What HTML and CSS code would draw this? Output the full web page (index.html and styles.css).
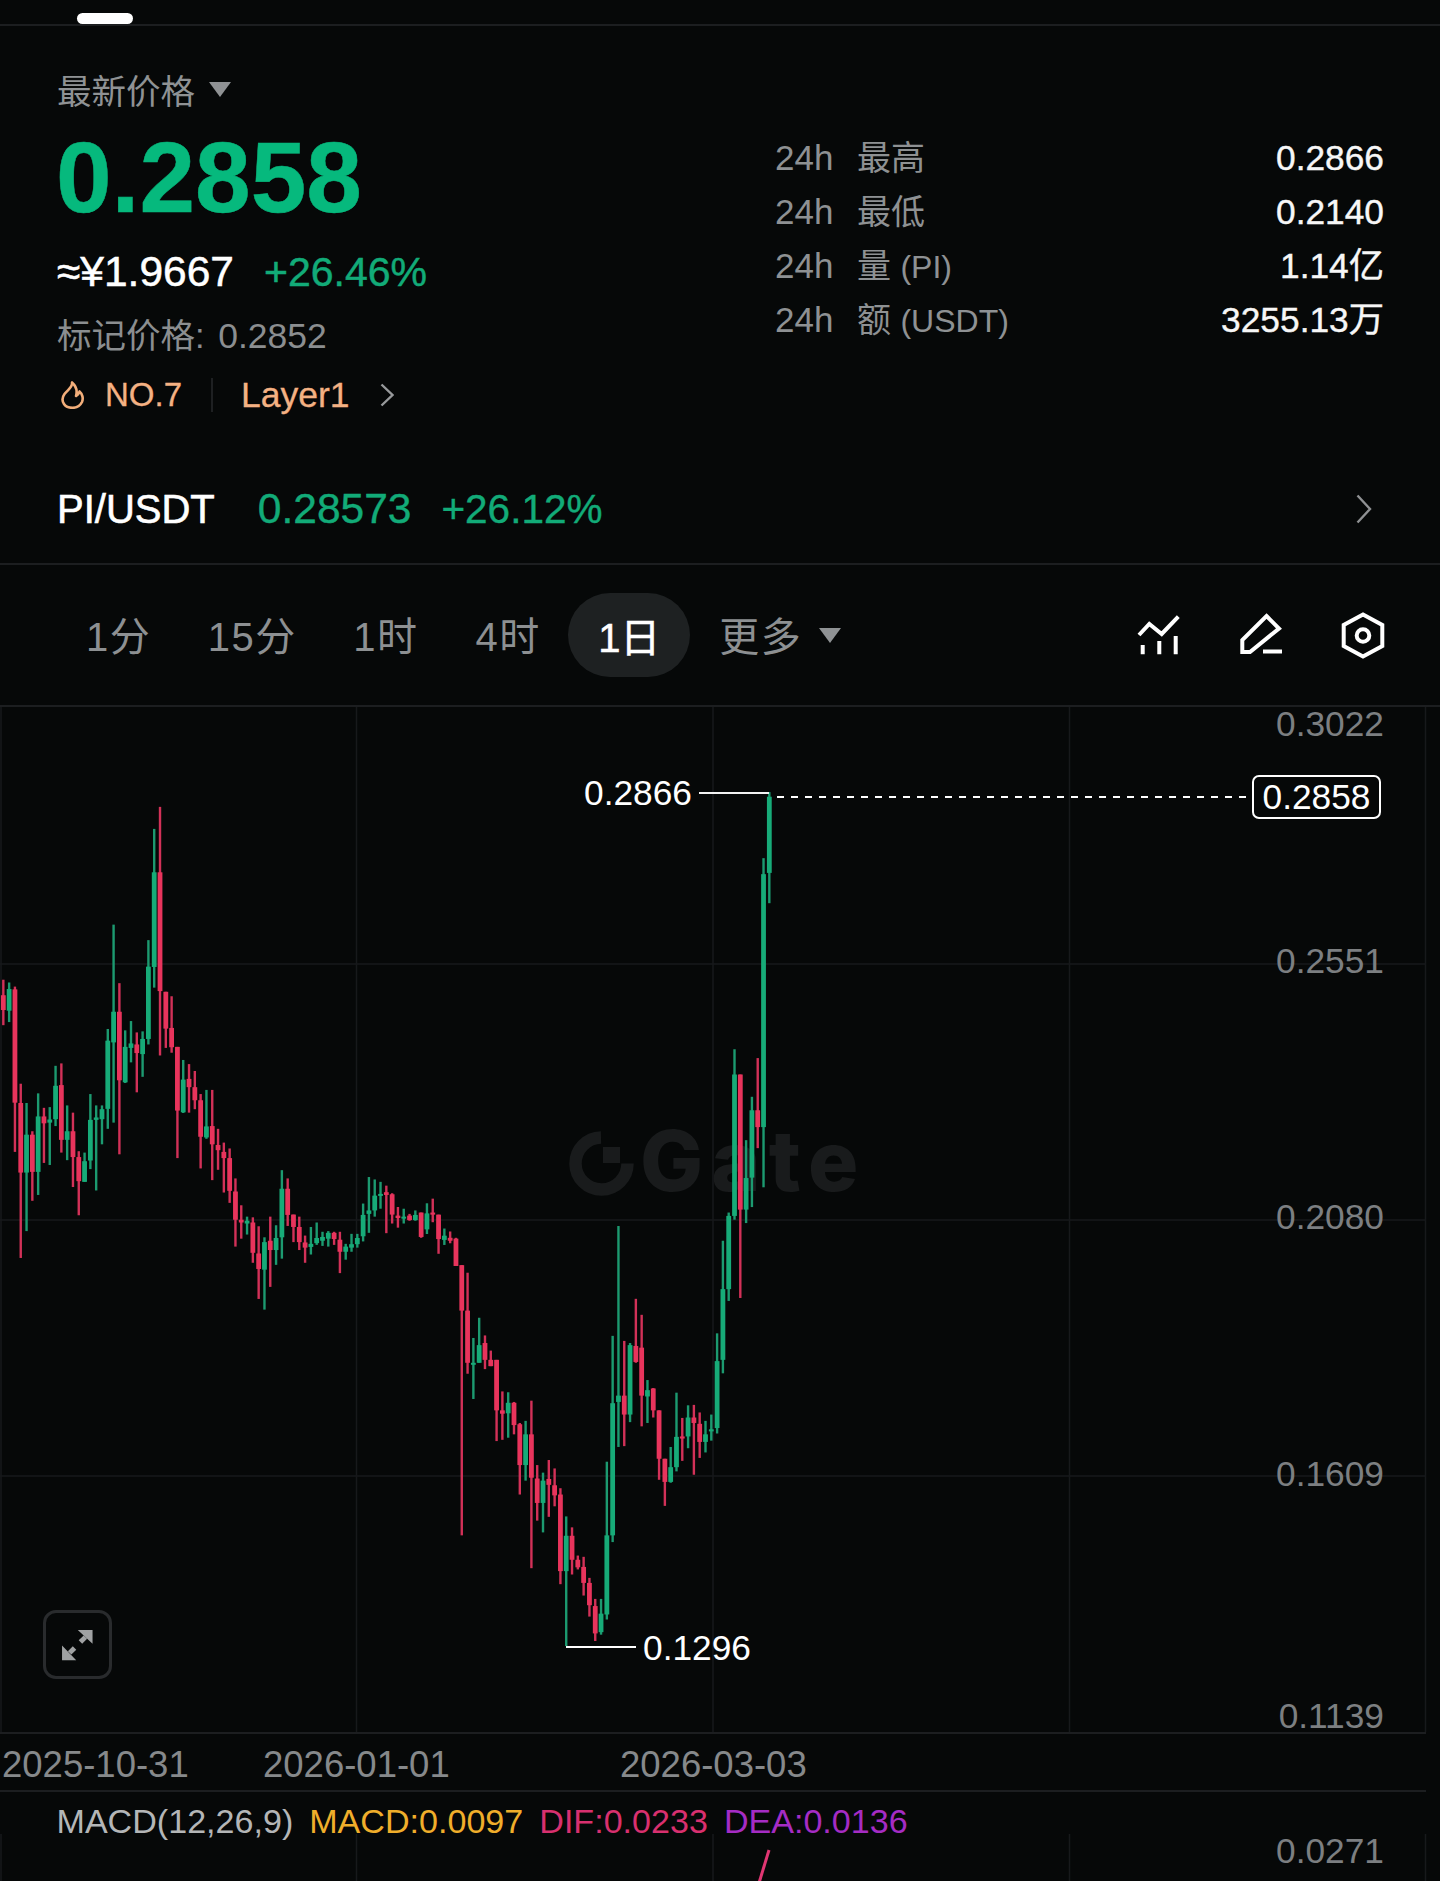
FILE: index.html
```html
<!DOCTYPE html>
<html lang="zh-CN">
<head>
    <meta charset="UTF-8">
    <meta name="viewport" content="width=device-width, initial-scale=1.0">
    <title>PI/USDT</title>
    <link rel="stylesheet" href="styles.css">
</head>
<body>
    <div class="topbar">
        <div class="topbar-pill"></div>
    </div>

    <section class="summary">
        <div class="price-col">
            <div class="price-label">最新价格 <span class="caret"></span></div>
            <div class="price-main">0.2858</div>
            <div class="price-sub">
                <span class="price-cny">≈¥1.9667</span>
                <span class="price-change">+26.46%</span>
            </div>
            <div class="price-mark">标记价格: <span class="price-mark-value">0.2852</span></div>
            <div class="tags">
                <svg class="flame" viewBox="0 0 24 28" width="24" height="28">
                    <path d="M11 1.500C12 6 7 8.500 3.500 13 1 16.500 1 20 3 23c2 3 5.500 3.800 8.500 3.800 4 0 7.500-1.800 9.500-5.800 1.500-3.500.5-8-2.500-10.500-.5 2-1.500 3.500-3.500 4.500C16.500 10 15 5 11 1.500Z" fill="none" stroke="#f2ae7a" stroke-width="2.600" stroke-linejoin="round"/>
                </svg>
                <span class="tag-rank">NO.7</span>
                <span class="tag-divider"></span>
                <span class="tag-sector">Layer1</span>
                <svg class="tag-chevron" viewBox="0 0 14 24" width="14" height="24">
                    <path d="M1.500 1.500 12.500 12 1.500 22.500" fill="none" stroke="#97999b" stroke-width="2.400"/>
                </svg>
            </div>
        </div>

        <div class="stats">
            <div class="stat-row"><span class="stat-name"><span class="stat-period">24h</span>最高</span><span class="stat-value">0.2866</span></div>
            <div class="stat-row"><span class="stat-name"><span class="stat-period">24h</span>最低</span><span class="stat-value">0.2140</span></div>
            <div class="stat-row"><span class="stat-name"><span class="stat-period">24h</span>量 <span class="stat-unit">(PI)</span></span><span class="stat-value">1.14亿</span></div>
            <div class="stat-row"><span class="stat-name"><span class="stat-period">24h</span>额 <span class="stat-unit">(USDT)</span></span><span class="stat-value">3255.13万</span></div>
        </div>
    </section>

    <section class="pair-row">
        <span class="pair-name">PI/USDT</span>
        <span class="pair-price">0.28573</span>
        <span class="pair-change">+26.12%</span>
        <svg class="pair-chevron" viewBox="0 0 16 30" width="16" height="30">
            <path d="M1.500 1.500 14 15 1.500 28.500" fill="none" stroke="#8f9193" stroke-width="2.400"/>
        </svg>
    </section>

    <nav class="timeframes">
        <a class="tf tf-1m">1分</a>
        <a class="tf tf-15m">15分</a>
        <a class="tf tf-1h">1时</a>
        <a class="tf tf-4h">4时</a>
        <a class="tf tf-active">1日</a>
        <a class="tf tf-more">更多 <span class="caret caret-more"></span></a>

        <div class="tools">
            <svg viewBox="0 0 48 48" width="48" height="48">
                <path d="M4 24 14.300 13 26.700 23 43.300 5.700" fill="none" stroke="#fff" stroke-width="4"/>
                <path d="M7.700 34v9.300M24.300 30v13.300M40.700 25v18.300" fill="none" stroke="#fff" stroke-width="4"/>
            </svg>
            <svg viewBox="0 0 48 48" width="48" height="48">
                <path d="M29.500 5 42 17.500 13 41H5.300V29Z" fill="none" stroke="#fff" stroke-width="4"/>
                <path d="M26 40.500H45" fill="none" stroke="#fff" stroke-width="4"/>
            </svg>
            <svg viewBox="0 0 48 48" width="48" height="48">
                <path d="M24 3.500 43.300 14V35L24 45.500 4.700 35V14Z" fill="none" stroke="#fff" stroke-width="4"/>
                <circle cx="24" cy="24.500" r="6.300" fill="none" stroke="#fff" stroke-width="4"/>
            </svg>
        </div>
    </nav>

    <section class="chart-main">
        <svg id="candles" class="chart-canvas" width="1440" height="1025"></svg>

        <span class="axis-price axis-3022">0.3022</span>
        <span class="axis-price axis-2551">0.2551</span>
        <span class="axis-price axis-2080">0.2080</span>
        <span class="axis-price axis-1609">0.1609</span>
        <span class="axis-price axis-1139">0.1139</span>

        <span class="marker marker-high">0.2866</span>
        <span class="marker marker-low">0.1296</span>
        <span class="last-price">0.2858</span>

        <div class="expand-btn">
            <svg viewBox="0 0 63 64" width="62" height="63">
                <path d="M32.300 17.300H47.300V31.300ZM16.300 33V48H30.700Z" fill="#a0a2a3"/>
                <path d="M24 40.500 29 35.500M35 29.500 40 24.500" stroke="#a0a2a3" stroke-width="5" fill="none"/>
            </svg>
        </div>
    </section>

    <section class="x-axis">
        <span class="axis-date date-first">2025-10-31</span>
        <span class="axis-date date-jan">2026-01-01</span>
        <span class="axis-date date-mar">2026-03-03</span>
    </section>

    <section class="macd">
        <svg id="macdGrid" class="chart-canvas" width="1440" height="89"></svg>
        <div class="macd-legend">
            <span class="legend-name">MACD(12,26,9)</span>
            <span class="legend-macd">MACD:0.0097</span>
            <span class="legend-dif">DIF:0.0233</span>
            <span class="legend-dea">DEA:0.0136</span>
        </div>
        <span class="axis-price axis-0271">0.0271</span>
    </section>

    <script src="app.js"></script>
</body>
</html>
```

FILE: styles.css
```css
* {
    box-sizing: border-box;
}
html, body {
    margin: 0;
    padding: 0;
}
body {
    width: 1440px;
    height: 1881px;
    overflow: hidden;
    background-color: #060808;
    color: #fff;
    font-family: "Liberation Sans", "Noto Sans CJK SC", sans-serif;
}

/* top strip */
.topbar {
    height: 26px;
    padding: 13px 0 0 77px;
    border-bottom: 2px solid #1c1e20;
}
.topbar-pill {
    width: 56px;
    height: 11px;
    border-radius: 6px;
    background-color: #fff;
}

/* price summary */
.summary {
    display: flex;
    justify-content: space-between;
    height: 389px;
    padding: 43px 56px 0 57px;
}
.price-label {
    display: flex;
    align-items: center;
    height: 40px;
    font-size: 34.500px;
    color: #8f9294;
}
.caret {
    display: inline-block;
    width: 0;
    height: 0;
    margin-left: 14px;
    border-left: 11px solid transparent;
    border-right: 11px solid transparent;
    border-top: 15px solid #8f9294;
}
.price-main {
    margin: 19px 0 0 -1px;
    height: 98px;
    line-height: 98px;
    font-size: 100px;
    font-weight: bold;
    color: #06b97d;
    -webkit-text-stroke: 0.5px #06b97d;
}
.price-sub {
    display: flex;
    align-items: center;
    gap: 30px;
    margin-top: 21px;
    height: 50px;
}
.price-cny {
    font-size: 42.500px;
    color: #fff;
    -webkit-text-stroke: 0.5px #fff;
}
.price-change {
    font-size: 41px;
    color: #12ab78;
    -webkit-text-stroke: 0.5px #12ab78;
}
.price-mark {
    margin-top: 17px;
    height: 44px;
    line-height: 44px;
    font-size: 34.500px;
    color: #8b8e90;
}
.price-mark-value {
    margin-left: 4px;
    font-size: 35.500px;
}
.tags {
    display: flex;
    align-items: center;
    margin-top: 17px;
    height: 40px;
    padding-left: 4px;
}
.tag-rank, .tag-sector {
    color: #f4b183;
    -webkit-text-stroke: 0.3px #f4b183;
}
.tag-rank {
    margin-left: 20px;
    font-size: 33px;
}
.tag-divider {
    width: 2px;
    height: 34px;
    margin: 0 28px 0 29px;
    background-color: #1e2022;
}
.tag-sector {
    font-size: 35.500px;
}
.tag-chevron {
    margin-left: 30px;
}

.stats {
    width: 609px;
    margin-top: 62px;
}
.stat-row {
    display: flex;
    justify-content: space-between;
    align-items: center;
    height: 54px;
    font-size: 34px;
    line-height: 40px;
}
.stat-name {
    color: #8e9193;
}
.stat-period {
    display: inline-block;
    width: 82px;
    font-size: 35px;
}
.stat-unit {
    font-size: 32px;
}
.stat-value {
    font-size: 35.300px;
    color: #f7f7f7;
    -webkit-text-stroke: 0.4px #f7f7f7;
}

/* pair row */
.pair-row {
    display: flex;
    align-items: center;
    height: 150px;
    padding: 40px 68px 0 57px;
    border-bottom: 2px solid #1c1e20;
}
.pair-name {
    font-size: 40px;
    color: #fff;
    -webkit-text-stroke: 0.6px #fff;
}
.pair-price {
    margin-left: 43px;
    font-size: 42.500px;
    color: #12ab78;
    -webkit-text-stroke: 0.4px #12ab78;
}
.pair-change {
    margin-left: 30px;
    font-size: 40.500px;
    color: #12ab78;
    -webkit-text-stroke: 0.4px #12ab78;
}
.pair-chevron {
    margin-left: auto;
}

/* timeframe tabs */
.timeframes {
    display: flex;
    align-items: center;
    height: 142px;
    padding: 0 53px 0 86px;
    border-bottom: 2px solid #1c1e20;
    font-size: 40px;
    letter-spacing: 1.500px;
    color: #8d9092;
}
.tf {
    padding-bottom: 3px;
}
.tf-15m {
    margin-left: 56.500px;
}
.tf-1h {
    margin-left: 56.500px;
}
.tf-4h {
    margin-left: 57px;
}
.tf-active {
    display: flex;
    align-items: center;
    justify-content: center;
    width: 122px;
    height: 84px;
    margin-left: 27.500px;
    padding-bottom: 1px;
    border-radius: 42px;
    background-color: #1e2122;
    letter-spacing: 0;
    color: #fff;
    -webkit-text-stroke: 0.5px #fff;
}
.tf-more {
    display: flex;
    align-items: center;
    margin-left: 29px;
}
.caret-more {
    margin: 3px 0 0 17px;
    border-left-width: 11.500px;
    border-right-width: 11.500px;
}
.tools {
    display: flex;
    gap: 54px;
    margin-left: auto;
}

/* chart */
.chart-main {
    position: relative;
    height: 1025px;
}
.chart-canvas {
    position: absolute;
    top: 0;
    left: 0;
}
.axis-price {
    position: absolute;
    right: 56px;
    font-size: 35.300px;
    line-height: 40px;
    color: #7c7f81;
}
.axis-3022 { top: -3px; }
.axis-2551 { top: 234px; }
.axis-2080 { top: 490px; }
.axis-1609 { top: 747px; }
.axis-1139 { top: 989px; }
.axis-0271 { top: 39px; }

.marker {
    position: absolute;
    font-size: 35.300px;
    line-height: 40px;
    color: #fff;
}
.marker-high {
    top: 66px;
    left: 584px;
}
.marker-low {
    top: 921px;
    left: 643px;
}
.last-price {
    position: absolute;
    top: 68px;
    left: 1252px;
    width: 129px;
    height: 44px;
    border: 2px solid #fff;
    border-radius: 7px;
    background-color: #060808;
    font-size: 35.300px;
    line-height: 40px;
    text-align: center;
    color: #fff;
}
.expand-btn {
    position: absolute;
    top: 903px;
    left: 43px;
    width: 69px;
    height: 69px;
    border: 3px solid #292b2d;
    border-radius: 13px;
}

/* date axis */
.x-axis {
    position: relative;
    height: 60px;
    border-top: 2px solid #1c1e20;
    border-bottom: 2px solid #1c1e20;
    width: 1426px;
}
.axis-date {
    position: absolute;
    top: 11px;
    font-size: 36.500px;
    line-height: 40px;
    color: #86898b;
}
.date-first { left: 2px; }
.date-jan { left: 263px; }
.date-mar { left: 620px; }

/* macd */
.macd {
    position: relative;
    height: 89px;
}
.macd-legend {
    position: relative;
    display: flex;
    gap: 16px;
    padding: 9px 0 0 56.500px;
    font-size: 34.100px;
    line-height: 40px;
}
.legend-name { color: #b4b6b7; }
.legend-macd { color: #f0ae2b; }
.legend-dif { color: #d8306f; }
.legend-dea { color: #a52cc4; }
```

FILE: app.js
```js
// candles read off the chart: [color, wickTop, bodyTop, bodyBottom, wickBottom]
// first block is measured from y=780 at 2.904 units per px, second from y=1000 at 2.376
const firstRun = [
    ["r",580,625,668,712],["g",588,607,670,703],["r",600,608,937,1080],["r",882,938,1140,1388],
    ["g",938,1030,1140,1310],["r",1020,1030,1138,1222],["g",910,977,1138,1205],["r",952,977,997,1112],
    ["g",950,986,995,1118],["g",830,888,985,1005],["r",823,886,1045,1082],["g",945,1020,1045,1104],
    ["r",966,1020,1095,1182],["r",1078,1095,1165,1264],["g",1082,1107,1167,1167],["g",912,987,1105,1130],
    ["g",945,980,987,1192],["g",945,956,985,1058],["g",723,757,955,1013],["g",420,673,762,995],
    ["r",590,673,872,1087],["g",727,775,878,880],["g",700,765,778,820],["r",733,768,793,907],
    ["g",730,752,796,862],["g",465,542,752,768],["g",142,268,543,603],["r",78,268,613,800],
    ["r",615,615,722,778],["r",628,720,776,792],["r",775,775,960,1098],["g",813,870,965,967],
    ["r",825,868,892,966],["r",845,892,930,956],["r",912,930,1036,1128],["g",900,1006,1038,1042],
    ["r",900,1005,1058,1162],["r",1013,1060,1075,1132],["r",1053,1080,1098,1198],["r",1070,1098,1193,1228],
    ["r",1157,1195,1277,1355],["r",1235,1277,1285,1332],["g",1268,1280,1288,1320],["r",1270,1285,1373,1402],
    ["r",1296,1375,1420,1507],["g",1328,1342,1422,1538],["r",1268,1338,1365,1472],["g",1293,1330,1365,1408],
    ["g",1133,1187,1328,1390],["r",1157,1187,1263,1295],["r",1262,1262,1298,1342],["r",1268,1298,1342,1365],
    ["r",1323,1343,1358,1402],["g",1298,1347,1356,1378],["g",1285,1330,1345,1350],["g",1312,1327,1338,1353],
    ["g",1310,1315,1332,1355],["r",1312,1315,1333,1350],["r",1312,1335,1370,1432],["g",1347,1355,1370,1393],
    ["g",1318,1348,1358,1370],["g",1318,1330,1348,1358],["g",1230,1263,1325,1340],["g",1153,1250,1260,1315],
    ["g",1160,1207,1250,1268],["g",1167,1202,1207,1245],["r",1178,1197,1205,1316],["r",1200,1203,1262,1288],
    ["r",1240,1265,1272,1300],["g",1245,1268,1270,1288],["r",1260,1265,1278,1280],["g",1250,1263,1278,1280]
];
const secondRun = [
    ["r",505,505,563,565],["g",483,507,545,556],["r",472,505,510,528],["r",510,510,568,603],
    ["g",543,560,570,582],["r",550,565,572,578],["r",565,567,632,632],["r",630,630,738,1272],
    ["r",648,738,862,888],["g",803,862,865,948],["g",755,820,862,862],["r",797,815,855,877],
    ["r",833,855,870,870],["r",855,855,975,1048],["r",930,975,983,1045],["g",932,957,982,1040],
    ["r",955,957,1010,1032],["r",1005,1008,1105,1175],["g",1000,1032,1105,1142],["r",952,1032,1135,1350],
    ["r",1105,1137,1195,1237],["g",1123,1142,1195,1265],["r",1093,1138,1152,1228],["r",1113,1153,1177,1203],
    ["r",1160,1175,1357,1388],["g",1227,1273,1357,1535],["r",1253,1273,1330,1365],["r",1320,1330,1348,1353],
    ["r",1323,1347,1385,1415],["r",1373,1385,1438,1465],["r",1423,1440,1505,1523],["g",1423,1458,1502,1508],
    ["g",1097,1272,1460,1472],["g",798,958,1272,1288],["g",537,940,955,1062],["r",810,940,985,1060],
    ["g",815,820,985,1003],["r",710,822,860,862],["r",748,826,940,1013],["g",903,927,942,1005],
    ["r",922,923,975,992],["r",975,975,1090,1140],["r",1090,1090,1145,1202],["g",1062,1110,1145,1147],
    ["g",933,1038,1110,1120],["r",993,1037,1042,1095],["g",963,992,1037,1065],["r",962,992,1005,1128],
    ["r",980,1007,1050,1088],["g",1000,1032,1050,1075],["g",985,1020,1025,1047],["g",792,858,1017,1030],
    ["g",572,687,855,887],["g",505,513,687,715],["g",117,177,513,522],["r",177,177,498,708],
    ["g",333,423,498,530],["g",230,262,422,492],["r",138,262,302,352],["g",-337,-299,302,445],
    ["g",-494,-483,-302,-230]
];

const NS = "http://www.w3.org/2000/svg";
const CHART_TOP = 707;
const COLORS = { g: "#17ab78", r: "#e8345c" };
const WICKS = { g: "#1c9a70", r: "#d23158" };
const GRID = "#17191b";

function add(svg, tag, attrs) {
    const el = document.createElementNS(NS, tag);
    for (const k in attrs) el.setAttribute(k, attrs[k]);
    svg.appendChild(el);
    return el;
}

function rect(svg, x, y, w, h, fill) {
    return add(svg, "rect", { x: x, y: y, width: w, height: h, fill: fill });
}

const chart = document.getElementById("candles");

// grid
[1, 356.5, 713, 1069.5, 1425.5].forEach(x => rect(chart, x - 0.75, 0, 1.5, 1025, GRID));
[257, 513, 769].forEach(y => rect(chart, 0, y - 0.75, 1426, 1.5, GRID));

// watermark goes under the candles
const mark = add(chart, "g", { fill: "#191b1c" });
add(mark, "path", {
    d: "M601 430.500A26 26 0 1 0 627.500 456.500",
    fill: "none",
    stroke: "#191b1c",
    "stroke-width": 12.5
});
rect(mark, 603, 440, 17, 16, "#191b1c");
add(mark, "text", {
    x: 640,
    y: 483.5,
    "font-family": "Inter",
    "font-weight": 800,
    "font-size": 84,
    "letter-spacing": 8
}).textContent = "Gate";

function drawCandle(candle, index, origin, scale) {
    const x = 3.33 + 5.803 * index;
    const toY = v => v / scale + origin - CHART_TOP;
    const top = toY(candle[1]);
    const bodyTop = toY(candle[2]);
    const bodyBottom = toY(candle[3]);
    const bottom = toY(candle[4]);
    rect(chart, x - 1.2, top, 2.4, bottom - top, WICKS[candle[0]]);
    rect(chart, x - 2.4, bodyTop, 4.8, Math.max(bodyBottom - bodyTop, 2), COLORS[candle[0]]);
}

firstRun.forEach((c, i) => drawCandle(c, i, 780, 2.904));
secondRun.forEach((c, i) => drawCandle(c, i + firstRun.length, 1000, 2.376));

// high / low leader lines and the dashed last price
rect(chart, 699, 85, 70, 2, "#f2f2f2");
rect(chart, 566, 939, 70, 2, "#fff");
add(chart, "line", {
    x1: 777, y1: 90, x2: 1246, y2: 90,
    stroke: "#fff", "stroke-width": 2, "stroke-dasharray": "7 7"
});

// macd pane
const macd = document.getElementById("macdGrid");
[1, 356.5, 713, 1069.5, 1425.5].forEach(x => rect(macd, x - 0.75, 42, 1.5, 47, GRID));
add(macd, "line", {
    x1: 769, y1: 58, x2: 759, y2: 91,
    stroke: "#e03672", "stroke-width": 3
});
```
